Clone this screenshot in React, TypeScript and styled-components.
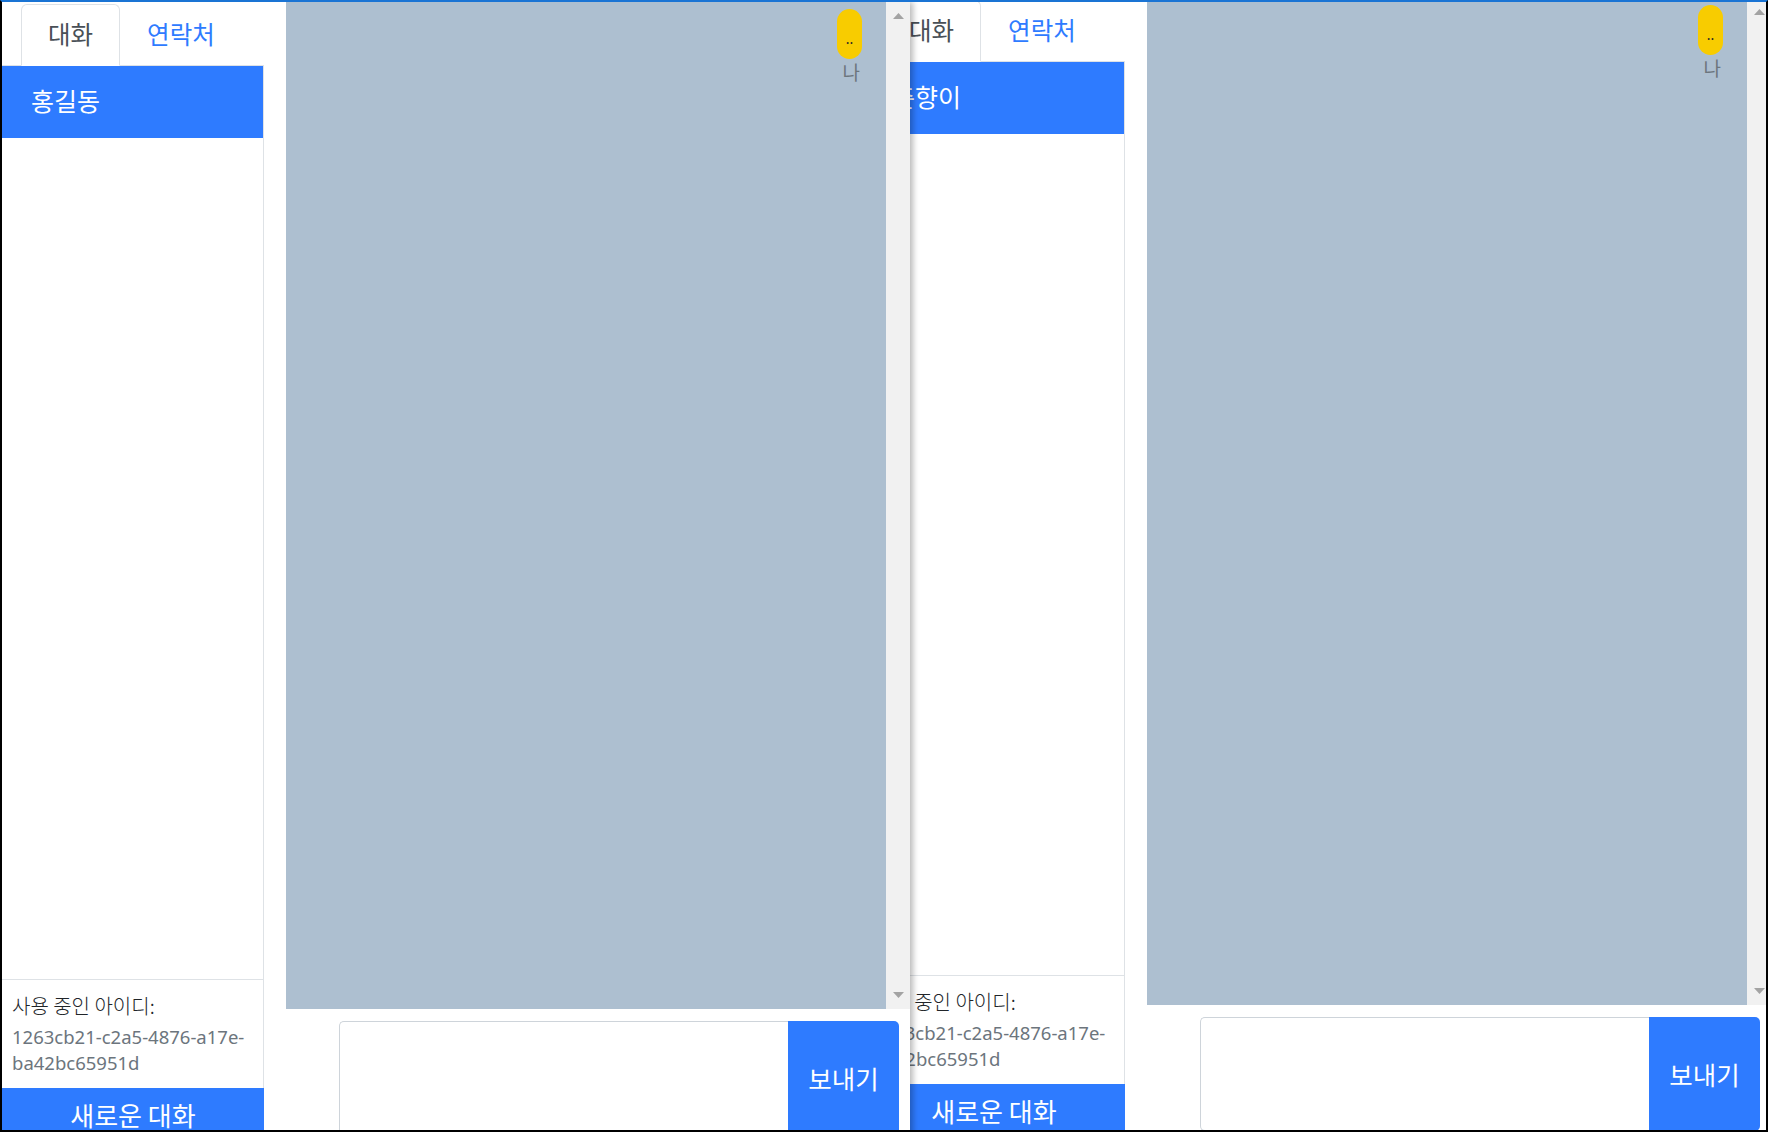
import React from "react";
import styled, { createGlobalStyle } from "styled-components";

const BLUE = "#2e7bff";
const BORDER = "#dee2e6";
const KR = `"Noto Sans CJK KR", "Noto Sans", sans-serif`;

const GlobalStyle = createGlobalStyle`
  html, body { margin: 0; padding: 0; background: #ffffff; }
  body {
    font-family: "Noto Sans", "Noto Sans CJK KR", sans-serif;
    color: #212529;
  }
  * { box-sizing: border-box; }
`;

const Desktop = styled.div`
  position: relative;
  width: 1768px;
  height: 1132px;
  border: 2px solid #000000;
  border-top-color: #1a74d4;
  overflow: hidden;
  background: #ffffff;
`;

const BrowserWindow = styled.div<{ $x: number; $y: number; $raised?: boolean }>`
  position: absolute;
  left: ${(p) => p.$x}px;
  top: ${(p) => p.$y}px;
  width: 908px;
  height: 1140px;
  display: flex;
  background: #ffffff;
  overflow: hidden;
  z-index: ${(p) => (p.$raised ? 2 : 1)};
  box-shadow: ${(p) => (p.$raised ? "3px 0 6px rgba(0, 0, 0, 0.28)" : "none")};
`;

const Sidebar = styled.aside`
  width: 262px;
  flex-shrink: 0;
  display: flex;
  flex-direction: column;
`;

const TabList = styled.nav`
  height: 64px;
  display: flex;
  align-items: flex-end;
  padding-left: 19px;
  border-bottom: 1px solid ${BORDER};
`;

const Tab = styled.button<{ $active?: boolean }>`
  height: 62px;
  margin-bottom: -1px;
  padding: 0 26px 2px;
  border: 1px solid transparent;
  border-radius: 6px 6px 0 0;
  background: ${(p) => (p.$active ? "#ffffff" : "transparent")};
  border-color: ${(p) => (p.$active ? `${BORDER} ${BORDER} #ffffff` : "transparent")};
  color: ${(p) => (p.$active ? "#495057" : BLUE)};
  font-family: ${KR};
  font-size: 24.5px;
  line-height: 1;
  cursor: pointer;
`;

const ConversationList = styled.ul`
  flex: 1;
  margin: 0;
  padding: 0;
  list-style: none;
  border-right: 1px solid ${BORDER};
`;

const ConversationItem = styled.li<{ $active?: boolean }>`
  height: 72px;
  display: flex;
  align-items: center;
  padding: 0 0 3px 29px;
  font-family: ${KR};
  font-size: 25px;
  line-height: 1;
  background: ${(p) => (p.$active ? BLUE : "#ffffff")};
  color: ${(p) => (p.$active ? "#ffffff" : "#212529")};
`;

const IdentityBox = styled.div`
  border-top: 1px solid ${BORDER};
  border-right: 1px solid ${BORDER};
  padding: 13px 10px 12px;
`;

const IdentityLabel = styled.div`
  font-family: ${KR};
  font-size: 20px;
  font-weight: 300;
  line-height: 26px;
  color: #212529;
`;

const IdentityValue = styled.div`
  margin-top: 5px;
  font-size: 18.5px;
  line-height: 26px;
  color: #6c757d;
`;

const NewConversationButton = styled.button`
  height: 54px;
  flex-shrink: 0;
  border: none;
  border-radius: 0;
  background: ${BLUE};
  color: #ffffff;
  font-family: ${KR};
  font-size: 26px;
  line-height: 1;
  cursor: pointer;
`;

const Main = styled.main`
  flex: 1;
  min-width: 0;
  margin-left: 22px;
  display: flex;
  flex-direction: column;
`;

const MessagePane = styled.section`
  flex: 1;
  min-height: 0;
  display: flex;
  background: #adbfd0;
`;

const MessageList = styled.div`
  flex: 1;
  display: flex;
  flex-direction: column;
  align-items: flex-end;
  padding: 7px 24px 0 0;
`;

const MessageGroup = styled.div`
  display: flex;
  flex-direction: column;
  align-items: flex-end;
`;

const Bubble = styled.div`
  width: 25px;
  height: 50px;
  border-radius: 13px;
  background: #f8cc00;
  color: #212529;
  text-align: center;
  font-size: 14px;
  line-height: 14px;
  padding-top: 23px;
`;

const Sender = styled.div`
  margin-right: 2px;
  font-family: ${KR};
  font-size: 19px;
  line-height: 26px;
  color: #6c757d;
`;

const Scrollbar = styled.div`
  width: 24px;
  flex-shrink: 0;
  background: #f1f1f1;
  display: flex;
  flex-direction: column;
  justify-content: space-between;
  align-items: center;
  padding: 11px 0;
`;

const Composer = styled.form`
  display: flex;
  padding: 12px 11px 7px 53px;
`;

const MessageInput = styled.textarea`
  flex: 1;
  height: 114px;
  border: 1px solid #ced4da;
  border-right: none;
  border-radius: 5px 0 0 5px;
  resize: none;
  background: #ffffff;
  outline: none;
`;

const SendButton = styled.button`
  width: 111px;
  height: 114px;
  border: none;
  border-radius: 0 5px 5px 0;
  background: ${BLUE};
  color: #ffffff;
  font-family: ${KR};
  font-size: 25.5px;
  line-height: 1;
  cursor: pointer;
`;

const Arrow = ({ down }: { down?: boolean }) => (
  <svg width="11" height="6" viewBox="0 0 11 6">
    <polygon points={down ? "0,0 11,0 5.5,6" : "0,6 11,6 5.5,0"} fill="#a3a3a3" />
  </svg>
);

const ChatApp = ({ contact }: { contact: string }) => (
  <>
    <Sidebar>
      <TabList>
        <Tab $active>대화</Tab>
        <Tab>연락처</Tab>
      </TabList>
      <ConversationList>
        <ConversationItem $active>{contact}</ConversationItem>
      </ConversationList>
      <IdentityBox>
        <IdentityLabel>사용 중인 아이디:</IdentityLabel>
        <IdentityValue>1263cb21-c2a5-4876-a17e-ba42bc65951d</IdentityValue>
      </IdentityBox>
      <NewConversationButton>새로운 대화</NewConversationButton>
    </Sidebar>
    <Main>
      <MessagePane>
        <MessageList>
          <MessageGroup>
            <Bubble>..</Bubble>
            <Sender>나</Sender>
          </MessageGroup>
        </MessageList>
        <Scrollbar>
          <Arrow />
          <Arrow down />
        </Scrollbar>
      </MessagePane>
      <Composer onSubmit={(e) => e.preventDefault()}>
        <MessageInput />
        <SendButton type="submit">보내기</SendButton>
      </Composer>
    </Main>
  </>
);

export default function App() {
  return (
    <>
      <GlobalStyle />
      <Desktop>
        <BrowserWindow $x={861} $y={-4}>
          <ChatApp contact="춘향이" />
        </BrowserWindow>
        <BrowserWindow $x={0} $y={0} $raised>
          <ChatApp contact="홍길동" />
        </BrowserWindow>
      </Desktop>
    </>
  );
}
